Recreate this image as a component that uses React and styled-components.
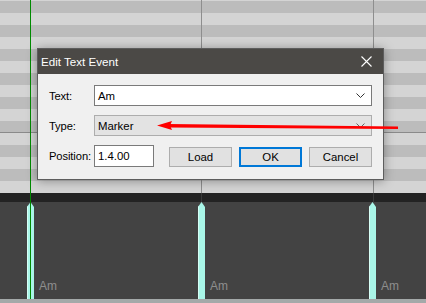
import React from "react";
import styled, { createGlobalStyle } from "styled-components";

const Global = createGlobalStyle`
  html, body { margin: 0; padding: 0; background: #424242; }
  #root { width: 426px; height: 303px; }
`;

const FONT = `"Liberation Sans", Arial, sans-serif`;

const Screen = styled.div`
  position: relative;
  width: 426px;
  height: 303px;
  overflow: hidden;
  display: flex;
  flex-direction: column;
  font-family: ${FONT};
`;

const Roll = styled.div`
  position: relative;
  height: 193px;
  display: flex;
  flex-direction: column;
  background-image: linear-gradient(#bcbcbc 0 12px, #d4d4d4 12px 24px);
  background-size: 100% 24px;
  background-position: 0 1px;
`;

const RollTop = styled.div`
  height: 132px;
  border-bottom: 1px solid #8a8a8a;
`;

const RollBottom = styled.div`
  flex: 1;
`;

const BarLine = styled.div`
  position: absolute;
  top: 0;
  bottom: 0;
  width: 1px;
  background: ${(p) => p.$color || "#8e8e8e"};
`;

const Ruler = styled.div`
  position: relative;
  height: 9px;
  background: #232323;
`;

const Lane = styled.div`
  position: relative;
  height: 97px;
  background: #434343;
`;

const Footer = styled.div`
  height: 4px;
  background: #a4a9a9;
`;

const Marker = styled.div`
  position: absolute;
  top: 0;
  bottom: 0;
  width: 7px;
  background: #a9f6e8;
  clip-path: polygon(0 5px, 50% 0, 100% 5px, 100% 100%, 0 100%);
  box-shadow: inset 1px 0 0 #d6fff6;
`;

const MarkerLabel = styled.span`
  position: absolute;
  bottom: 7px;
  font-family: ${FONT};
  font-size: 12px;
  line-height: 12px;
  color: #8e8e8e;
`;

const Playhead = styled.div`
  position: absolute;
  top: 0;
  bottom: 4px;
  left: 30px;
  width: 1px;
  background: #008a00;
`;

const Dialog = styled.div`
  position: absolute;
  left: 37px;
  top: 48px;
  width: 345px;
  height: 130px;
  border: 1px solid #5d5d5d;
  background: #f0f0f0;
  box-shadow: 0 1px 10px rgba(0, 0, 0, 0.35);
  display: flex;
  flex-direction: column;
`;

const TitleBar = styled.div`
  height: 25px;
  background: #4b4946;
  display: flex;
  align-items: center;
  justify-content: space-between;
  padding-left: 3px;
`;

const Title = styled.span`
  color: #ffffff;
  font-family: ${FONT};
  font-size: 11.6px;
`;

const CloseBtn = styled.div`
  width: 34px;
  height: 25px;
  display: flex;
  align-items: center;
  justify-content: center;
`;

const Body = styled.div`
  padding: 11px 11px 12px 11px;
  display: grid;
  grid-template-columns: 45px 1fr;
  grid-template-rows: 21px 21px 22px;
  row-gap: 9px;
  align-items: center;
`;

const Label = styled.label`
  font-family: ${FONT};
  font-size: 11.2px;
  color: #000;
  letter-spacing: -0.1px;
`;

const Combo = styled.div`
  height: 21px;
  box-sizing: border-box;
  border: 1px solid ${(p) => (p.$disabled ? "#adadad" : "#7a7a7a")};
  background: ${(p) => (p.$disabled ? "#e3e3e3" : "#ffffff")};
  display: flex;
  align-items: center;
  justify-content: space-between;
  padding: 0 6px 0 3px;
  font-family: ${FONT};
  font-size: 11.4px;
  color: #000;
`;

const Row = styled.div`
  display: flex;
  align-items: flex-end;
  height: 22px;
`;

const Input = styled.div`
  width: 60px;
  height: 22px;
  box-sizing: border-box;
  border: 1px solid #7a7a7a;
  background: #fff;
  padding: 2px 3px 0;
  font-family: ${FONT};
  font-size: 11.4px;
  line-height: 17px;
  color: #000;
`;

const Buttons = styled.div`
  margin-left: auto;
  display: flex;
  gap: 7px;
`;

const Button = styled.div`
  width: 63px;
  height: 20px;
  box-sizing: border-box;
  border: ${(p) => (p.$primary ? "2px solid #0078d7" : "1px solid #adadad")};
  background: #e1e1e1;
  display: flex;
  align-items: center;
  justify-content: center;
  font-family: ${FONT};
  font-size: 11.4px;
  color: #000;
`;

const Arrow = styled.svg`
  position: absolute;
  left: 0;
  top: 0;
  pointer-events: none;
`;

const Chevron = ({ color = "#333" }) => (
  <svg width="9" height="5" viewBox="0 0 9 5">
    <polyline points="0.5,0.5 4.5,4.5 8.5,0.5" fill="none" stroke={color} strokeWidth="1" />
  </svg>
);

const markers = [27, 198, 369];

export default function App() {
  return (
    <>
      <Global />
      <Screen>
        <Roll>
          <RollTop />
          <RollBottom />
          <BarLine style={{ left: 201 }} />
          <BarLine style={{ left: 373 }} />
        </Roll>
        <Ruler>
          <BarLine $color="#3a3a3a" style={{ left: 201 }} />
          <BarLine $color="#3a3a3a" style={{ left: 373 }} />
        </Ruler>
        <Lane>
          {markers.map((x) => (
            <React.Fragment key={x}>
              <Marker style={{ left: x }} />
              <MarkerLabel style={{ left: x + 12 }}>Am</MarkerLabel>
            </React.Fragment>
          ))}
        </Lane>
        <Footer />
        <Playhead />

        <Dialog>
          <TitleBar>
            <Title>Edit Text Event</Title>
            <CloseBtn>
              <svg width="11" height="11" viewBox="0 0 11 11">
                <path d="M0.5 0.5 L10.5 10.5 M10.5 0.5 L0.5 10.5" stroke="#fff" strokeWidth="1.1" />
              </svg>
            </CloseBtn>
          </TitleBar>
          <Body>
            <Label>Text:</Label>
            <Combo>
              <span>Am</span>
              <Chevron />
            </Combo>
            <Label>Type:</Label>
            <Combo $disabled>
              <span>Marker</span>
              <Chevron color="#666" />
            </Combo>
            <Label>Position:</Label>
            <Row>
              <Input>1.4.00</Input>
              <Buttons>
                <Button>Load</Button>
                <Button $primary>OK</Button>
                <Button>Cancel</Button>
              </Buttons>
            </Row>
          </Body>
        </Dialog>

        <Arrow width="426" height="303" viewBox="0 0 426 303">
          <polygon points="168,124 398,126.5 398,129 168,127.5" fill="#ff0000" />
          <polygon points="157,125.5 172,121 170,125.5 172,130" fill="#ff0000" />
        </Arrow>
      </Screen>
    </>
  );
}
